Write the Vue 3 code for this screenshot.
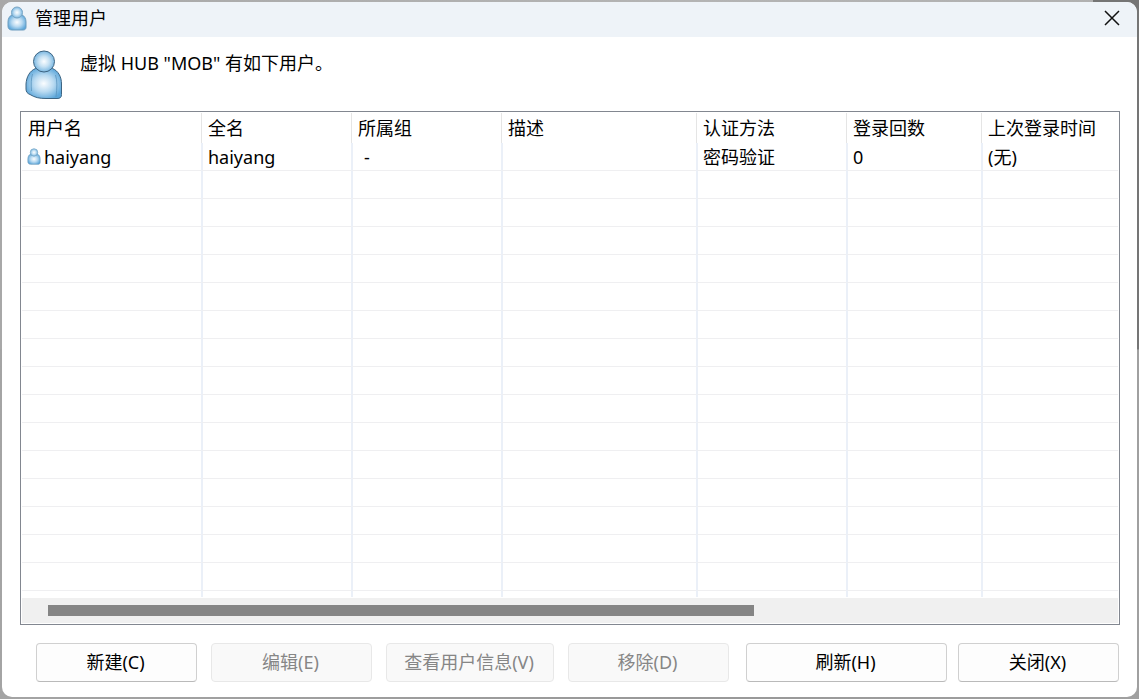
<script setup>
const columns = [
  { key: 'name', label: '用户名' },
  { key: 'fullName', label: '全名' },
  { key: 'group', label: '所属组' },
  { key: 'note', label: '描述' },
  { key: 'auth', label: '认证方法' },
  { key: 'logins', label: '登录回数' },
  { key: 'lastLogin', label: '上次登录时间' },
]

const users = [
  {
    name: 'haiyang',
    fullName: 'haiyang',
    group: '-',
    note: '',
    auth: '密码验证',
    logins: '0',
    lastLogin: '(无)',
  },
]

const emptyRows = 16

const leftButtons = [
  { label: '新建(C)', enabled: true },
  { label: '编辑(E)', enabled: false },
  { label: '查看用户信息(V)', enabled: false, wide: true },
  { label: '移除(D)', enabled: false },
]
</script>

<template>
  <div class="desktop">
    <svg class="defs" width="0" height="0" aria-hidden="true">
      <defs>
        <radialGradient id="headFill" cx="0.5" cy="0.5" r="0.56">
          <stop offset="0" stop-color="#fbfdff" />
          <stop offset="0.45" stop-color="#c6e1f3" />
          <stop offset="1" stop-color="#67addd" />
        </radialGradient>
        <radialGradient id="bodyFill" cx="0.5" cy="0.5" r="0.56">
          <stop offset="0" stop-color="#fbfdff" />
          <stop offset="0.5" stop-color="#b9daf1" />
          <stop offset="1" stop-color="#5ba6da" />
        </radialGradient>
        <symbol id="person" viewBox="0 0 38 50">
          <path
            d="M10.500 18.500C4.500 21 1.500 27 1 34v5c0 3 1.500 4.500 4 5.500 5 3 9 4 16 4h11c3 0 4.500-1 4.500-4V34c0-7-3-13-9-15.500z"
            fill="url(#bodyFill)"
            stroke="#3d6482"
          />
          <path d="M7.500 24c-1.500 5-1.500 10-1 17M30.500 25c2 6 1.500 13 .5 22" fill="none" stroke="#5b94be" stroke-width="0.800" />
          <circle cx="19" cy="11.500" r="10.500" fill="url(#headFill)" stroke="#3d6482" />
        </symbol>
        <symbol id="personSmall" viewBox="0 0 20 25">
          <path
            d="M5.500 8.500C2.500 10 1 12.500 1 16v4c0 2.500 1.500 4 4 4h11c2 0 3-1 3-3v-5c0-3.500-1.500-6-4.500-7.500z"
            fill="url(#bodyFill)"
            stroke="#6d9cbd"
          />
          <circle cx="10" cy="6.500" r="5.500" fill="url(#headFill)" stroke="#7ba6c4" />
        </symbol>
      </defs>
    </svg>

    <main class="window">
      <header class="titlebar">
        <svg class="title-icon" aria-hidden="true"><use href="#personSmall" /></svg>
        <h1>管理用户</h1>
        <button class="close" type="button" aria-label="关闭窗口">
          <svg width="16" height="16" viewBox="0 0 16 16" aria-hidden="true">
            <path d="M1 1l14 14M15 1L1 15" stroke="#111" stroke-width="1.500" fill="none" />
          </svg>
        </button>
      </header>

      <div class="intro">
        <svg class="intro-icon" aria-hidden="true"><use href="#person" /></svg>
        <p>虚拟 HUB "MOB" 有如下用户。</p>
      </div>

      <section class="list">
        <div class="viewport">
          <table>
            <colgroup>
              <col v-for="c in columns" :key="c.key" :class="'col-' + c.key" />
            </colgroup>
            <thead>
              <tr>
                <th v-for="c in columns" :key="c.key" scope="col">{{ c.label }}</th>
              </tr>
            </thead>
            <tbody>
              <tr v-for="u in users" :key="u.name">
                <td v-for="c in columns" :key="c.key" :class="'cell-' + c.key">
                  <span class="cell">
                    <svg v-if="c.key === 'name'" class="row-icon" aria-hidden="true"><use href="#personSmall" /></svg>
                    {{ u[c.key] }}
                  </span>
                </td>
              </tr>
              <tr v-for="n in emptyRows" :key="n">
                <td v-for="c in columns" :key="c.key"></td>
              </tr>
            </tbody>
          </table>
        </div>
        <div class="scrollbar"><div class="thumb"></div></div>
      </section>

      <footer class="actions">
        <div class="group">
          <button
            v-for="b in leftButtons"
            :key="b.label"
            type="button"
            class="btn"
            :class="{ wide: b.wide }"
            :disabled="!b.enabled"
          >{{ b.label }}</button>
        </div>
        <div class="group right">
          <button type="button" class="btn refresh">刷新(H)</button>
          <button type="button" class="btn">关闭(X)</button>
        </div>
      </footer>
    </main>
  </div>
</template>

<style>
body {
  margin: 0;
}
</style>

<style scoped>
* {
  box-sizing: border-box;
}

.desktop {
  height: 100vh;
  min-height: 360px;
  padding: 2px;
  display: flex;
  background:
    linear-gradient(90deg, transparent 96%, #757575 96%) top / 100% 50% no-repeat,
    linear-gradient(90deg, #a8a8a8, #b4b4b4 60%, #b0b0b0) top / 100% 50% no-repeat,
    linear-gradient(90deg, #a4a4a4, #989898 60%, #a0a0a0);
  color: #000;
  font-family: "Noto Sans", "Noto Sans CJK SC", sans-serif;
  font-size: 18px;
  line-height: 24px;
}

.defs {
  position: absolute;
}

.window {
  flex: 1;
  min-width: 0;
  display: flex;
  flex-direction: column;
  background: #fff;
  border-radius: 10px;
  overflow: hidden;
}

.titlebar {
  display: flex;
  align-items: center;
  height: 35px;
  padding: 0 17px 3px 5px;
  background: #eef3f8;
}

.title-icon {
  width: 20px;
  height: 25px;
}

h1 {
  flex: 1;
  margin: 0 0 0 8px;
  font-size: 18px;
  font-weight: 400;
}

.close {
  display: flex;
  padding: 0;
  border: 0;
  background: none;
}

.intro {
  display: flex;
  gap: 17px;
  padding: 13px 18px 11px 23px;
}

.intro-icon {
  width: 38px;
  height: 50px;
}

.intro p {
  margin: 0;
  line-height: 26px;
}

.list {
  flex: 1;
  min-height: 0;
  display: flex;
  flex-direction: column;
  margin: 0 17px 0 18px;
  padding: 1px;
  border: 1px solid #828790;
}

.viewport {
  flex: 1;
  min-height: 0;
  overflow: hidden;
}

table {
  width: 100%;
  table-layout: fixed;
  border-collapse: separate;
  border-spacing: 0;
}

.col-name {
  width: 179px;
}

.col-fullName,
.col-group,
.col-auth {
  width: 150px;
}

.col-note {
  width: 195px;
}

.col-logins {
  width: 135px;
}

th {
  height: 30px;
  padding: 0 0 0 6px;
  border-left: 1px solid #e5e5e5;
  font-weight: 400;
  text-align: left;
  white-space: nowrap;
}

td {
  height: 28px;
  padding: 0 0 0 5px;
  border-left: 2px solid #ebf0f8;
  border-bottom: 1px solid #efeff1;
  white-space: nowrap;
}

th:first-child,
td:first-child {
  border-left: 0;
}

.cell {
  display: flex;
  align-items: center;
}

.cell-group {
  padding-left: 11px;
}

.row-icon {
  width: 14px;
  height: 17px;
  margin-right: 3px;
}

.scrollbar {
  height: 26px;
  padding: 7px 364px 0 26px;
  border-top: 1px solid #fff;
  background: #f0f0f0;
}

.thumb {
  height: 11px;
  background: #858585;
}

.actions {
  display: flex;
  justify-content: space-between;
  gap: 17px;
  padding: 18px 18px 15px 34px;
}

.group {
  display: flex;
  gap: 14px;
}

.group.right {
  gap: 11px;
}

.btn {
  width: 161px;
  height: 39px;
  padding: 0 2px 2px 0;
  border: 1px solid #d0d0d0;
  border-bottom-color: #bababa;
  border-radius: 4px;
  background: #fdfdfd;
  color: #000;
  font: inherit;
  white-space: nowrap;
}

.btn.wide {
  width: 168px;
}

.btn.refresh {
  width: 201px;
}

.btn:disabled {
  border-color: #e8e8e8;
  background: #f9f9f9;
  color: #868686;
}
</style>
